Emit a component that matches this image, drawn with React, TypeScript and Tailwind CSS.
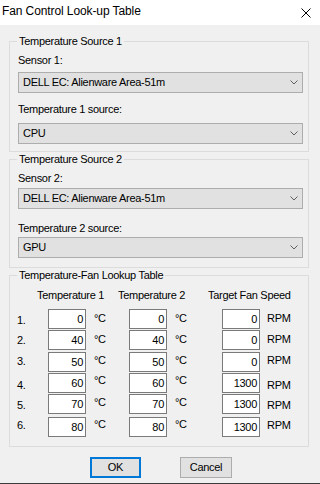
import React from "react";

function Chevron() {
  return (
    <svg width="8" height="5" viewBox="0 0 8 5">
      <polyline points="0.5,0.5 4,4 7.5,0.5" fill="none" stroke="#606060" strokeWidth="1" />
    </svg>
  );
}

function Combo({ value, className }: { value: string; className: string }) {
  return (
    <div
      className={`ml-[8px] mr-[5px] flex h-[21px] items-center justify-between border border-[#adadad] bg-[#e1e1e1] pl-[4px] pr-[4px] ${className}`}
    >
      <span className="leading-[13px]">{value}</span>
      <Chevron />
    </div>
  );
}

function Group({
  title,
  className,
  children,
}: {
  title: string;
  className: string;
  children: React.ReactNode;
}) {
  return (
    <div className={`border border-[#dcdcdc] ${className}`}>
      <div className="-mt-[7px] ml-[7px] w-fit bg-[#f0f0f0] px-[2px] leading-[13px]">{title}</div>
      {children}
    </div>
  );
}

function Box({ v }: { v: string }) {
  return (
    <div className="flex h-[20px] w-[38px] shrink-0 items-center justify-end border border-[#7a7a7a] bg-white pr-[2px] leading-[13px]">
      {v}
    </div>
  );
}

const rows = [
  { n: "1.", a: "0", b: "0", f: "0", rowMt: "mt-0", nMt: "mt-[5px]", cMt: "mt-[3px]", rMt: "mt-[3px]" },
  { n: "2.", a: "40", b: "40", f: "0", rowMt: "mt-[1px]", nMt: "mt-[4px]", cMt: "mt-[3px]", rMt: "mt-[3px]" },
  { n: "3.", a: "50", b: "50", f: "0", rowMt: "mt-[2px]", nMt: "mt-[3px]", cMt: "mt-[2px]", rMt: "mt-[2px]" },
  { n: "4.", a: "60", b: "60", f: "1300", rowMt: "mt-[1px]", nMt: "mt-[6px]", cMt: "mt-[1px]", rMt: "mt-[6px]" },
  { n: "5.", a: "70", b: "70", f: "1300", rowMt: "mt-[1px]", nMt: "mt-[5px]", cMt: "mt-[2px]", rMt: "mt-[5px]" },
  { n: "6.", a: "80", b: "80", f: "1300", rowMt: "mt-[3px]", nMt: "mt-[2px]", cMt: "mt-[1px]", rMt: "mt-[2px]" },
];

export default function App() {
  return (
    <div className="flex h-[484px] w-[320px] flex-col overflow-hidden bg-[#f0f0f0] font-['Liberation_Sans',Arial,sans-serif] text-[11px] tracking-[-0.3px] text-black">
      {/* Title bar */}
      <div className="flex h-[25px] shrink-0 items-start justify-between bg-white">
        <div className="pl-[2px] pt-[4px] text-[12px] leading-[15px] tracking-[-0.1px]">Fan Control Look-up Table</div>
        <svg className="mr-[9px] mt-[8px]" width="10" height="10" viewBox="0 0 10 10">
          <path d="M0.5 0.5 L9.5 9.5 M9.5 0.5 L0.5 9.5" stroke="#000" strokeWidth="1" fill="none" />
        </svg>
      </div>

      <div className="ml-[9px] mr-[11px] flex flex-col">
        <Group title="Temperature Source 1" className="mt-[16px] pb-[7px]">
          <div className="mt-[6px] pl-[8px] leading-[13px]">Sensor 1:</div>
          <Combo value="DELL EC: Alienware Area-51m" className="mt-[5px]" />
          <div className="mt-[10px] pl-[8px] leading-[13px]">Temperature 1 source:</div>
          <Combo value="CPU" className="mt-[7px]" />
        </Group>

        <Group title="Temperature Source 2" className="mt-[7px] pb-[9px]">
          <div className="mt-[6px] pl-[8px] leading-[13px]">Sensor 2:</div>
          <Combo value="DELL EC: Alienware Area-51m" className="mt-[3px]" />
          <div className="mt-[13px] pl-[8px] leading-[13px]">Temperature 2 source:</div>
          <Combo value="GPU" className="mt-[2px]" />
        </Group>

        <Group title="Temperature-Fan Lookup Table" className="mt-[7px] pb-[9px]">
          <div className="mt-[7px] flex leading-[13px]">
            <div className="ml-[27px] w-[81px]">Temperature 1</div>
            <div className="w-[90px]">Temperature 2</div>
            <div>Target Fan Speed</div>
          </div>
          <div className="mt-[7px] flex flex-col">
            {rows.map((r) => (
              <div key={r.n} className={`flex items-start leading-[13px] ${r.rowMt}`}>
                <div className={`w-[38px] pl-[7px] ${r.nMt}`}>{r.n}</div>
                <Box v={r.a} />
                <div className={`w-[43px] pl-[8px] ${r.cMt}`}>°C</div>
                <Box v={r.b} />
                <div className={`w-[55px] pl-[8px] ${r.cMt}`}>°C</div>
                <Box v={r.f} />
                <div className={`pl-[7px] ${r.rMt}`}>RPM</div>
              </div>
            ))}
          </div>
        </Group>
      </div>

      {/* Buttons */}
      <div className="mt-[10px] flex pl-[90px]">
        <div className="flex h-[21px] w-[51px] items-center justify-center border-2 border-[#0078d7] bg-[#e1e1e1] leading-[13px]">
          OK
        </div>
        <div className="ml-[39px] flex h-[21px] w-[52px] items-center justify-center border border-[#adadad] bg-[#e1e1e1] leading-[13px]">
          Cancel
        </div>
      </div>

      <div className="mt-auto h-[1px] w-full bg-[#3c3c3c]" />
    </div>
  );
}
